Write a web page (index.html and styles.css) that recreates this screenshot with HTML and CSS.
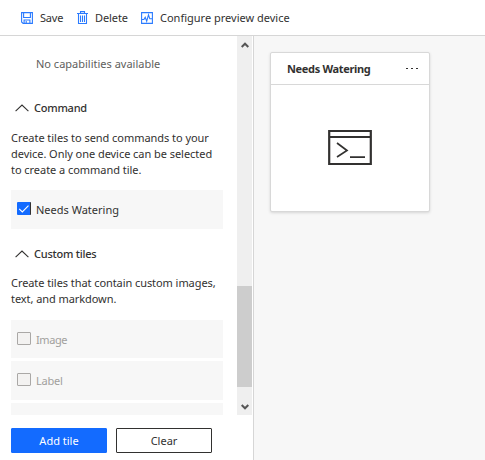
FILE: index.html
```html
<!DOCTYPE html>
<html lang="en">
<head>
<meta charset="utf-8">
<title>Dashboard editor</title>
<link rel="stylesheet" href="styles.css">
</head>
<body>
<header class="toolbar">
  <button class="tool save"><svg width="12" height="12" viewBox="0 0 12 12"><path d="M.6.6h10.8v10.8H2.1L.6 9.9zM2.6.6v4.9h6.8V.6M3.1 11.4V8h5.8v3.4M5.2 9v2.4"/></svg><span>Save</span></button>
  <button class="tool delete"><svg width="11" height="14" viewBox="0 0 11 14"><path d="M0 2.5h11M3.5 2.4V.6h4v1.8M1.5 2.8v9.7h8V2.8M3.5 4.5v6.5M5.5 4.5v6.5M7.5 4.5v6.5"/></svg><span>Delete</span></button>
  <button class="tool configure"><svg width="12" height="12" viewBox="0 0 12 12"><path d="M.6.6h10.8v10.8H.6zM.8 7.5h2.1l1.3-2.3 1.5 4 1.8-6.3 1.3 3.9h2.5"/></svg><span>Configure preview device</span></button>
</header>
<div class="workspace">
  <aside class="panel">
    <div class="scroller">
      <div class="content">
        <p class="empty"><span>No capabilities available</span></p>
        <h2 class="section"><svg width="14" height="8" viewBox="0 0 14 8"><path d="M.6 7.2 7 1l6.4 6.2"/></svg><span>Command</span></h2>
        <p class="description">Create tiles to send commands to your<br>device. Only one device can be selected<br>to create a command tile.</p>
        <label class="option selected"><span class="box"><svg width="14" height="13" viewBox="0 0 14 13"><path d="m2.2 6.8 3.1 3.1 6.2-6.3"/></svg></span><span>Needs Watering</span></label>
        <h2 class="section custom"><svg width="14" height="8" viewBox="0 0 14 8"><path d="M.6 7.2 7 1l6.4 6.2"/></svg><span>Custom tiles</span></h2>
        <p class="description second">Create tiles that contain custom images,<br>text, and markdown.</p>
        <label class="option disabled image"><span class="box"></span><span>Image</span></label>
        <label class="option disabled"><span class="box"></span><span>Label</span></label>
        <label class="option disabled"></label>
      </div>
      <div class="scrollbar">
        <svg class="up" width="8" height="6" viewBox="0 0 8 6"><path d="M.7 5 4 1.7 7.3 5"/></svg>
        <div class="thumb"></div>
        <svg class="down" width="8" height="6" viewBox="0 0 8 6"><path d="M.7 1 4 4.3 7.3 1"/></svg>
      </div>
    </div>
    <footer class="actions"><button class="btn primary">Add tile</button><button class="btn">Clear</button></footer>
  </aside>
  <main class="canvas">
    <article class="tile">
      <header class="tile-head"><span>Needs Watering</span><svg width="13" height="3" viewBox="0 0 13 3"><path d="M0 0h2v1H0zM5 0h2v1H5zM10 0h2v1h-2z"/></svg></header>
      <div class="tile-body"><svg width="44" height="35" viewBox="0 0 44 35"><path class="frame" d="M1.2 1h41.6v33H1.2zM1 7h42"/><path class="prompt" d="m9 13 10 7.5L9 27M22 27.2h15"/></svg></div>
    </article>
  </main>
</div>
</body>
</html>
```
FILE: styles.css
```css
* { box-sizing: border-box; }
body { margin: 0; height: 460px; overflow: hidden; display: flex; flex-direction: column; background: #fff; color: #323130; font: 11px/16px "Noto Sans", "Open Sans", sans-serif; }
p, h2 { margin: 0; }
button { font: inherit; color: inherit; }
svg { display: block; flex: none; fill: none; }
span { white-space: nowrap; }
.toolbar { height: 36px; flex: none; display: flex; align-items: center; padding-left: 21px; border-bottom: 1px solid #d6d6d6; }
.tool { display: flex; align-items: center; padding: 0; border: 0; background: none; height: 35px; gap: 7px; }
.tool svg { stroke: #2b7bff; stroke-width: 1.1; }
.tool span { padding-top: 1px; }
.save { width: 56px; letter-spacing: -0.2px; }
.delete { width: 64px; letter-spacing: -0.08px; }
.delete span { padding-left: 0; }
.workspace { display: flex; flex: 1; min-height: 0; }
.panel { width: 254px; border-right: 1px solid #d6d6d6; }
.scroller { height: 379px; display: flex; justify-content: space-between; overflow: hidden; padding-right: 1px; }
.content { width: 212px; margin-left: 11px; }
.empty { padding: 20px 0 0 25px; color: #605e5c; }
.section { display: flex; align-items: center; gap: 5px; padding-left: 4px; margin-top: 28px; height: 16px; font-size: 11px; font-weight: 500; letter-spacing: -0.24px; }
.section svg { stroke: #323130; stroke-width: 1.1; }
.description { margin-top: 14px; height: 48px; white-space: nowrap; letter-spacing: -0.045px; }
.option { display: flex; align-items: center; height: 39px; margin-top: 12px; padding-left: 6px; background: #f7f7f7; gap: 5px; }
.box { width: 14px; height: 13px; border: 1px solid #aaa8a6; border-radius: 1px; background: #f3f2f1; margin-bottom: 2px; }
.option > span + span { padding-top: 1px; }
.selected .box { background: #136bff; border: 0; border-right: 1px solid #323130; }
.box svg { stroke: #fff; stroke-width: 1.1; }
.custom { margin-top: 17px; }
.second { margin-top: 13px; height: 32px; letter-spacing: -0.07px; }
.disabled { margin-top: 2px; color: #a19f9d; letter-spacing: -0.2px; }
.disabled + .disabled { margin-top: 3px; }
.image { margin-top: 13px; height: 38px; }
.image span { letter-spacing: -0.4px; }
.scrollbar { width: 15px; background: #efefef; display: flex; flex-direction: column; align-items: center; padding-top: 6px; }
.scrollbar svg { stroke: #555; stroke-width: 2; }
.thumb { width: 15px; height: 101px; margin-top: 238px; background: #cdcdcd; }
.down { margin-top: 17px; }
.actions { display: flex; gap: 9px; padding: 13px 0 0 11px; }
.btn { width: 96px; height: 25px; padding: 0; border: 1px solid #323130; border-radius: 1px; background: #fff; }
.primary { background: #136bff; color: #fff; border-color: #136bff; }
.canvas { flex: 1; background: #f7f7f7; padding: 16px 0 0 16px; }
.tile { width: 160px; height: 160px; background: #fff; border: 1px solid #d8d8d8; border-radius: 2px; box-shadow: 0 1px 3px #0002; }
.tile-head { height: 32px; border-bottom: 1px solid #d8d8d8; display: flex; align-items: center; justify-content: space-between; padding: 1px 10px 0 16px; font-weight: 700; letter-spacing: -0.33px; }
.tile-head svg { fill: #323130; }
.tile-body { display: flex; justify-content: center; padding-top: 45px; }
.frame { stroke: #323130; stroke-width: 2.2; }
.prompt { stroke: #323130; stroke-width: 1.7; }
```
